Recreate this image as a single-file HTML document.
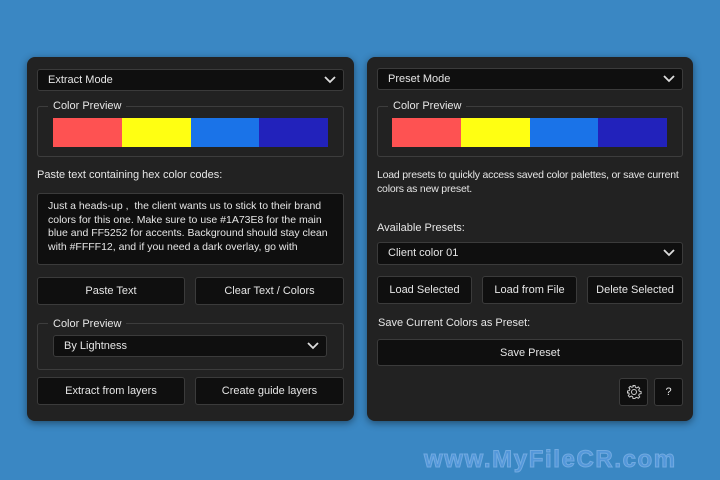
<!DOCTYPE html>
<html><head><style>
*{box-sizing:border-box;margin:0;padding:0}
body{width:720px;height:480px;background:#3a87c3;position:relative;overflow:hidden;font-family:"Liberation Sans",sans-serif;font-size:11px;color:#e6e6e6}
.p{position:absolute;background:#222222;border-radius:8px;box-shadow:0 2px 8px rgba(0,0,0,.45)}
.a{position:absolute}
.sel,.btn,.ta{position:absolute;background:#0f0f0f;border:1px solid #3b3b3b;border-radius:3px}
.sel{padding-left:10px;line-height:20px}
.sel svg{position:absolute;right:7px;top:6px}
.btn{display:flex;align-items:center;justify-content:center}
.fs{position:absolute;border:1px solid #3d3d3d;border-radius:3px}
.lg{position:absolute;background:#222;padding:0 5px;line-height:12px}
.sw{position:absolute;display:flex}
.sw div{flex:1}
.ta{padding:6px 10px;line-height:13.5px;font-size:10.5px;overflow:hidden}
.wm{position:absolute;left:424px;top:446px;font:bold 24px "Liberation Sans",sans-serif;color:#5a9be0;-webkit-text-stroke:1px #7fb3e8;letter-spacing:1.6px;opacity:.8}
</style></head><body>
<div class="p" style="left:27px;top:57px;width:327px;height:364px"></div>
<div class="p" style="left:367px;top:57px;width:326px;height:364px"></div>

<div class="sel" style="left:37px;top:69px;width:307px;height:22px">Extract Mode<svg width="12" height="8"><path d="M1 1l5 5 5-5" stroke="#ddd" stroke-width="1.8" fill="none"/></svg></div>
<div class="fs" style="left:37px;top:106px;width:307px;height:51px"></div>
<div class="lg" style="left:48px;top:100px">Color Preview</div>
<div class="sw" style="left:53px;top:118px;width:275px;height:29px"><div style="background:#fe5252"></div><div style="background:#ffff12"></div><div style="background:#1a73e8"></div><div style="background:#2222bb"></div></div>
<div class="a" style="left:37px;top:169px">Paste text containing hex color codes:</div>
<div class="ta" style="left:37px;top:193px;width:307px;height:72px">Just a heads-up ,&nbsp; the client wants us to stick to their brand colors for this one. Make sure to use #1A73E8 for the main blue and FF5252 for accents. Background should stay clean with #FFFF12, and if you need a dark overlay, go with</div>
<div class="btn" style="left:37px;top:277px;width:148px;height:28px">Paste Text</div>
<div class="btn" style="left:195px;top:277px;width:149px;height:28px">Clear Text / Colors</div>
<div class="fs" style="left:37px;top:323px;width:307px;height:47px"></div>
<div class="lg" style="left:48px;top:318px">Color Preview</div>
<div class="sel" style="left:53px;top:335px;width:274px;height:22px">By Lightness<svg width="12" height="8"><path d="M1 1l5 5 5-5" stroke="#ddd" stroke-width="1.8" fill="none"/></svg></div>
<div class="btn" style="left:37px;top:377px;width:148px;height:28px">Extract from layers</div>
<div class="btn" style="left:195px;top:377px;width:149px;height:28px">Create guide layers</div>

<div class="sel" style="left:377px;top:68px;width:306px;height:22px">Preset Mode<svg width="12" height="8"><path d="M1 1l5 5 5-5" stroke="#ddd" stroke-width="1.8" fill="none"/></svg></div>
<div class="fs" style="left:377px;top:106px;width:306px;height:51px"></div>
<div class="lg" style="left:388px;top:100px">Color Preview</div>
<div class="sw" style="left:392px;top:118px;width:275px;height:29px"><div style="background:#fe5252"></div><div style="background:#ffff12"></div><div style="background:#1a73e8"></div><div style="background:#2222bb"></div></div>
<div class="a" style="left:377px;top:168px;width:315px;line-height:14px;font-size:10.5px;letter-spacing:-0.2px">Load presets to quickly access saved color palettes, or save current colors as new preset.</div>
<div class="a" style="left:377px;top:222px">Available Presets:</div>
<div class="sel" style="left:377px;top:242px;width:306px;height:23px;line-height:21px">Client color 01<svg width="12" height="8"><path d="M1 1l5 5 5-5" stroke="#ddd" stroke-width="1.8" fill="none"/></svg></div>
<div class="btn" style="left:377px;top:276px;width:95px;height:28px">Load Selected</div>
<div class="btn" style="left:482px;top:276px;width:95px;height:28px">Load from File</div>
<div class="btn" style="left:587px;top:276px;width:96px;height:28px">Delete Selected</div>
<div class="a" style="left:378px;top:317px">Save Current Colors as Preset:</div>
<div class="btn" style="left:377px;top:339px;width:306px;height:27px">Save Preset</div>
<div class="btn" style="left:619px;top:378px;width:29px;height:28px"><svg width="16" height="16" viewBox="0 0 16 16"><circle cx="8" cy="8" r="2.5" fill="none" stroke="#ccc" stroke-width="1"/><path d="M7 1.5h2l.4 1.8 1.3.6 1.6-1 1.4 1.4-1 1.6.6 1.3 1.8.4v2l-1.8.4-.6 1.3 1 1.6-1.4 1.4-1.6-1-1.3.6L9 14.5H7l-.4-1.8-1.300-.6-1.6 1-1.4-1.4 1-1.6-.6-1.3L1.5 9V7l1.8-.4.6-1.3-1-1.6 1.4-1.4 1.6 1 1.3-.6z" fill="none" stroke="#ccc" stroke-width="1"/></svg></div>
<div class="btn" style="left:654px;top:378px;width:29px;height:28px">?</div>
<div class="wm">www.MyFileCR.com</div>
</body></html>
